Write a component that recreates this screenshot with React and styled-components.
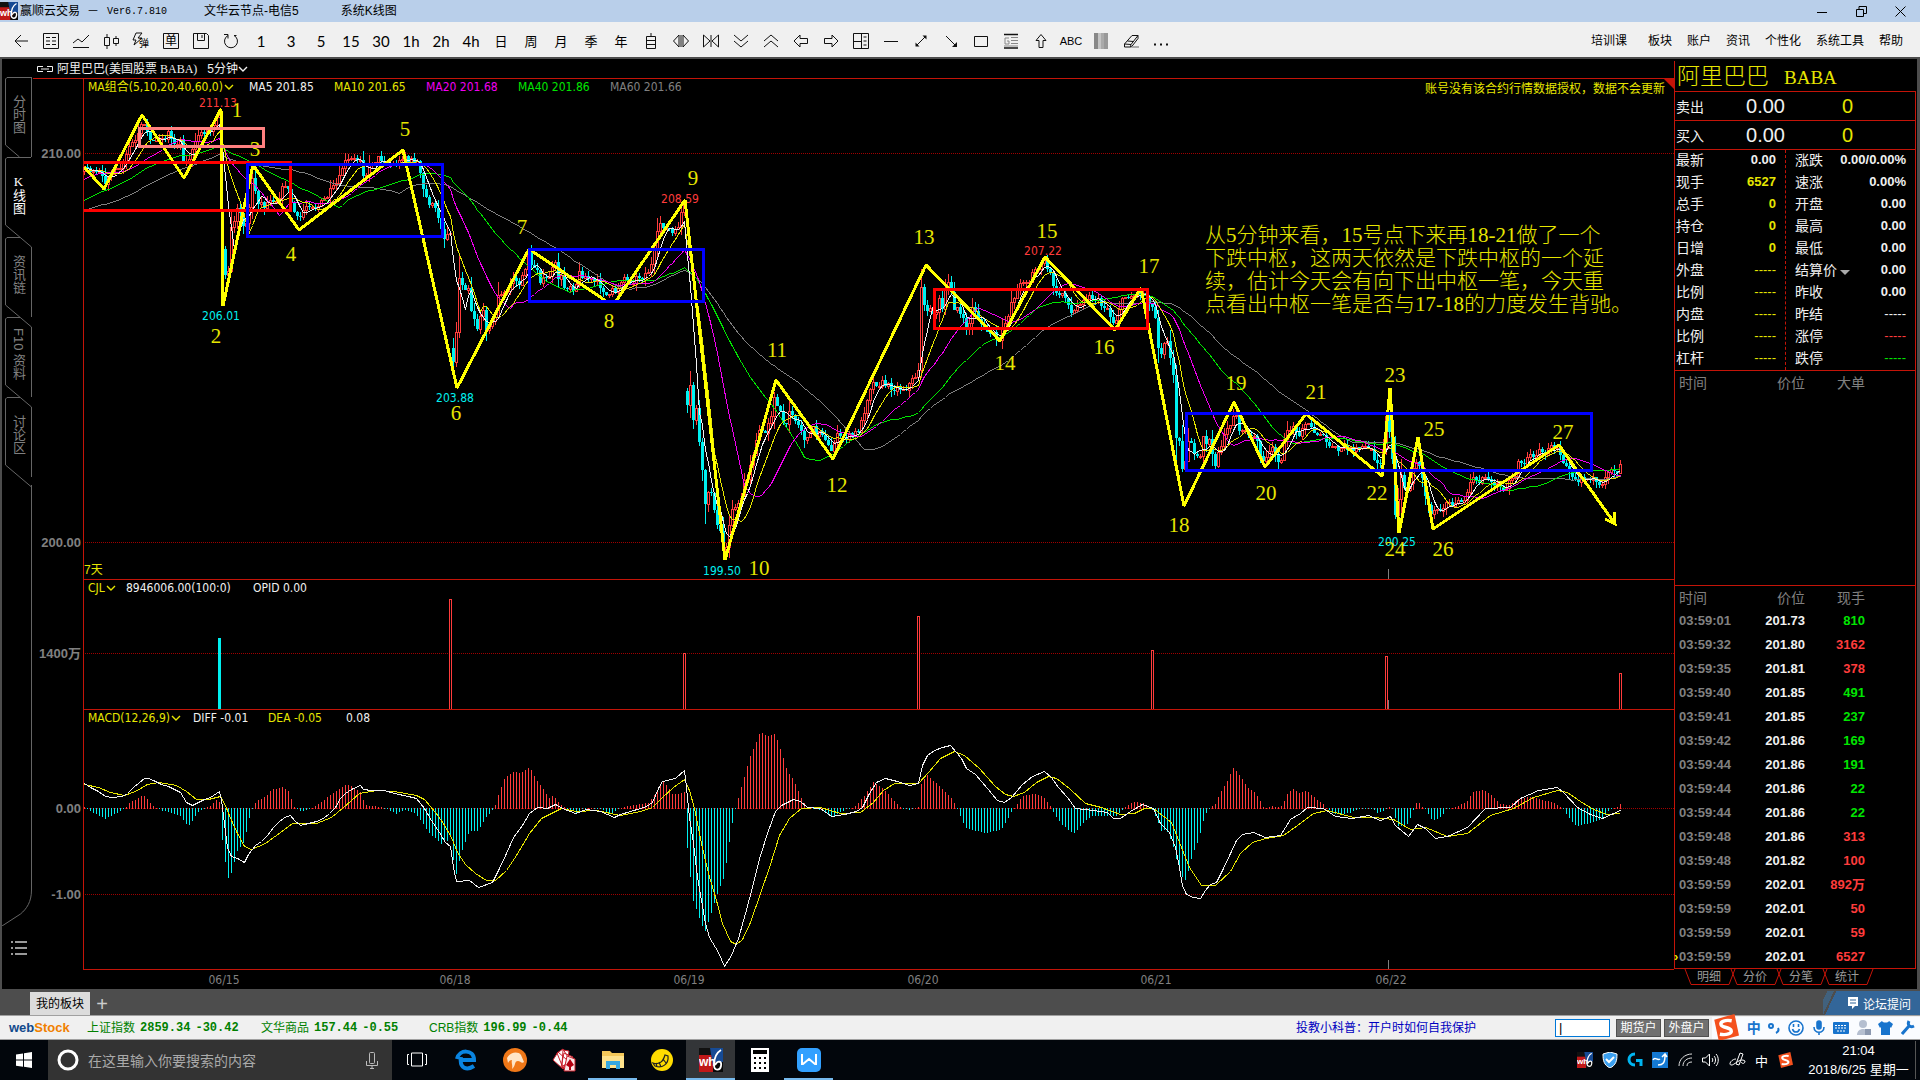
import React from "react";
import styled, { createGlobalStyle, ThemeProvider } from "styled-components";

const theme = {
    line: "#c41408",
    grid: "#a00000",
    up: "#ff3c3c",
    down: "#00f0f0",
    yellow: "#e6e600",
    bright: "#ffff00",
    white: "#f0f0f0",
    magenta: "#f000f0",
    green: "#00e600",
    gray: "#808080",
    frame: "#4d4d4d",
    bar: "#f0f0f0",
    cjk: '"Noto Sans CJK SC", sans-serif',
    ui: '"Liberation Sans", "Noto Sans CJK SC", sans-serif',
    legend: '"DejaVu Sans Condensed", "Noto Sans", "Noto Sans CJK SC", sans-serif',
    thin: '"Lato", "Noto Sans CJK SC", sans-serif',
    serif: '"Liberation Serif", "Noto Sans CJK SC", serif',
    mono: '"Liberation Mono", "Noto Sans CJK SC", monospace'
};

const GlobalStyle = createGlobalStyle`
    * {
        box-sizing: border-box;
    }

    body {
        margin: 0;
        background: #000;
        font-family: ${theme.ui};
        font-size: 12px;
    }

    button {
        margin: 0;
        padding: 0;
        border: 0;
        background: none;
        color: inherit;
        font: inherit;
        white-space: nowrap;
    }

    svg {
        display: block;
        flex: none;
    }
`;

const Window = styled.div`
    display: flex;
    flex-direction: column;
    min-height: 100vh;
    overflow: hidden;
`;

/* ---------- series data ---------- */

const parse = (text) =>
    text.trim().split(/\s+/).map((pair) => pair.split(",").map(Number));

const sample = (points, x) => {
    let i = 1;
    while (i < points.length - 1 && points[i][0] < x) i += 1;
    const [x0, y0] = points[i - 1];
    const [x1, y1] = points[i];
    return y0 + ((y1 - y0) * (x - x0)) / (x1 - x0);
};

const STEP = 3;
const FIRST = 84;
const LAST = 1620;
const GAPS = [222, 453, 687];

const CLOSES = parse(`
-96,230 -36,232 0,222 24,205 40,185 60,172 84,167 88,168 94,175 100,172 104,185 107,173 112,173 118,170 124,162
130,143 135,142 139,133 142,123 147,131 153,142 159,135 163,140 168,132 173,143 180,140 184,165 188,160 194,147
198,134 204,131 210,130 214,120 216,114 219,112 222,250 225,272 228,268 231,230 235,215 239,207 241,213 244,230
247,218 250,200 253,170 256,200 261,203 265,207 269,197 276,200 282,189 286,182 290,200 294,212 298,222 304,207
310,203 316,208 322,202 329,193 335,186 339,178 343,163 349,160 357,159 361,158 364,180 367,170 373,160 380,158
386,163 392,165 398,163 404,153 408,162 414,160 418,163 422,187 427,200 433,207 437,213 441,226 443,240 446,235
450,230 453,363 456,330 459,278 462,283 465,287 468,286 471,310 474,318 477,328 480,315 483,313 486,327 489,323
492,323 495,317 498,293 501,295 507,292 510,283 514,275 517,285 520,283 523,275 525,267 528,252 531,268 534,267
537,268 540,280 546,280 549,275 552,270 555,265 558,277 561,277 564,287 570,285 573,288 576,283 579,273 583,275
590,280 597,282 600,285 603,290 607,297 610,297 613,287 616,293 619,283 622,277 625,277 628,282 632,280 637,277
642,277 646,272 649,270 653,260 656,240 659,223 662,223 665,230 668,227 670,232 673,235 677,230 680,215 684,205
687,408 690,387 693,420 696,407 699,443 702,473 705,503 709,492 711,492 714,507 717,527 720,533 723,550 726,547
728,532 730,513 733,503 735,508 738,505 741,497 744,478 747,480 750,463 754,450 757,440 760,425 762,433 765,433
769,417 771,413 775,388 778,417 781,413 784,427 787,428 789,408 792,412 796,423 799,427 802,432 805,442 808,440
811,423 816,435 820,427 823,435 826,445 829,447 832,453 835,432 838,438 844,437 850,436 856,432 860,427 864,410
868,393 871,383 877,383 883,383 889,386 895,388 901,388 907,387 913,378 915,376 918,369 921,285 924,308 928,308
931,313 934,310 937,312 940,295 942,310 945,293 948,283 952,293 954,307 958,307 960,315 965,325 968,330 971,308
975,310 979,320 983,328 987,332 991,333 995,337 999,342 1003,328 1007,317 1011,302 1015,293 1019,287 1024,277
1028,283 1032,273 1037,267 1040,267 1044,262 1048,270 1052,280 1056,295 1062,293 1067,297 1069,313 1073,313
1078,303 1083,297 1089,297 1095,298 1101,305 1107,307 1111,320 1115,323 1118,310 1124,297 1130,295 1136,295
1141,292 1146,295 1150,303 1154,313 1156,323 1158,345 1161,352 1164,340 1168,338 1171,370 1173,377 1176,437
1180,438 1183,480 1185,463 1188,440 1191,440 1194,457 1198,460 1200,457 1203,438 1206,442 1209,440 1212,457
1215,463 1219,448 1224,437 1227,430 1231,420 1234,412 1238,420 1240,437 1245,428 1249,438 1254,437 1258,445
1261,457 1265,465 1267,455 1272,450 1277,460 1281,457 1285,437 1290,427 1293,425 1297,437 1302,425 1306,422
1310,427 1315,433 1320,432 1325,442 1331,447 1338,450 1343,448 1349,447 1352,455 1357,447 1363,448 1368,447
1374,457 1379,463 1382,460 1386,414 1389,433 1392,460 1395,517 1399,493 1401,477 1405,487 1407,490 1410,482
1413,470 1416,460 1418,460 1421,473 1424,493 1426,497 1429,510 1432,513 1436,507 1440,508 1445,503 1450,503
1456,505 1461,500 1466,500 1470,480 1474,478 1477,485 1483,475 1486,475 1490,485 1495,483 1500,488 1506,485
1511,478 1515,475 1518,460 1524,463 1529,457 1534,453 1540,452 1545,453 1550,448 1556,445 1559,450 1563,460
1566,463 1572,475 1577,480 1581,477 1586,478 1591,477 1595,483 1600,490 1604,483 1607,470 1612,467 1616,472
1621,463
`);

const DIFF = `
84,783 90,787 98,791 105,796 112,797 122,796 127,793 133,787 139,782 144,778 148,778 153,780 161,784 168,786
176,790 180,792 186,802 192,805 198,802 204,799 210,797 216,793 219,791 221,800 224,823 227,847 231,856 237,858
244,862 248,854 255,845 261,841 267,835 273,827 278,822 284,817 290,815 294,820 300,825 308,823 316,821 323,818
329,813 335,807 340,798 345,793 351,789 360,785 363,789 371,790 384,790 394,793 408,796 416,798 424,808 431,820
439,832 445,842 450,846 453,867 456,881 469,880 478,887 492,882 499,868 506,853 513,837 522,825 529,813 537,807
547,808 555,804 562,808 575,813 586,809 600,811 607,814 614,817 620,814 640,808 646,806 652,802 658,788 662,781
675,778 684,770 686,787 689,817 693,843 697,877 701,900 705,923 709,937 718,952 724,966 731,955 738,938 745,913
752,887 760,855 767,833 775,811 781,805 793,799 800,801 807,807 820,808 831,816 844,814 856,811 862,807 869,793
876,782 885,778 897,781 909,785 918,783 922,765 927,755 934,750 942,747 950,745 956,752 961,758 966,768 975,774
987,788 997,800 1004,802 1011,797 1022,784 1032,776 1044,771 1051,777 1058,787 1067,797 1075,808 1093,810
1107,812 1113,818 1120,818 1130,811 1142,804 1153,808 1160,823 1169,832 1175,847 1179,867 1182,885 1186,894
1193,897 1200,898 1205,890 1210,884 1216,882 1223,868 1230,853 1236,840 1242,834 1253,832 1265,837 1280,835
1290,819 1300,813 1307,807 1323,808 1335,816 1352,818 1368,815 1380,820 1390,816 1395,825 1408,836 1417,824
1425,828 1435,838 1447,836 1467,827 1485,808 1510,807 1520,798 1538,790 1557,787 1563,792 1577,807 1590,814
1602,818 1620,810
`;

const DEA = `
84,784 98,787 110,792 124,795 135,791 147,784 159,782 176,785 186,791 196,799 208,799 220,796 224,803 231,820
237,833 244,846 251,849 265,843 280,832 292,823 316,823 331,817 343,807 359,793 376,790 394,791 416,795 424,799
435,812 443,823 451,837 457,852 465,864 475,873 486,880 495,880 506,870 516,855 529,833 541,818 551,813 561,808
576,811 596,810 620,815 640,811 652,807 662,797 673,787 684,779 689,790 694,808 701,843 708,873 716,900 722,923
730,941 736,944 742,939 750,922 760,893 769,867 779,835 789,818 801,808 820,807 840,813 860,812 873,802 883,790
894,783 918,783 928,772 940,758 954,751 964,755 979,768 995,786 1005,794 1013,796 1024,792 1036,782 1048,776
1056,778 1069,788 1085,803 1101,807 1120,814 1134,813 1144,808 1153,808 1171,822 1179,842 1189,867 1201,885
1215,885 1230,871 1240,853 1252,842 1265,838 1283,835 1297,825 1313,813 1327,810 1353,817 1373,817 1393,819
1410,829 1425,827 1447,836 1467,833 1490,815 1513,808 1533,797 1557,790 1567,792 1580,801 1593,809 1607,814
1620,813
`;

const HIST = parse(`
84,2 90,-3 105,-11 120,-3 124,0 129,6 143,14 153,3 160,-2 180,-8 188,-19 198,-4 204,0 210,3 216,9 219,7 222,-32
225,-54 228,-70 231,-65 237,-43 243,-35 246,-24 249,-10 252,0 256,8 265,12 271,19 282,22 288,18 294,2 301,-4
310,0 318,5 329,13 345,24 351,23 360,17 365,4 380,2 385,0 396,-6 404,-2 414,-5 420,-12 428,-24 441,-36 447,-33
450,-27 453,-52 456,-66 461,-45 469,-23 478,-23 486,-9 494,0 496,8 504,30 512,37 521,36 529,42 537,28 549,11
553,13 561,4 566,0 576,-5 586,1 598,0 610,-6 617,-2 623,2 640,5 648,6 658,20 663,28 673,14 684,17 687,-40
690,-69 693,-93 702,-118 705,-123 711,-105 717,-86 723,-71 726,-55 729,-34 732,-15 735,0 738,11 741,22 750,53
760,77 767,73 775,75 781,57 787,38 793,30 799,15 805,4 810,0 824,-3 832,-9 844,-2 850,0 856,4 864,13 873,27
883,20 897,5 902,0 910,-2 918,2 921,25 927,34 940,22 952,10 957,0 962,-14 967,-21 985,-25 1001,-22 1009,-8
1013,0 1017,5 1022,13 1034,15 1042,13 1050,3 1053,-4 1060,-15 1073,-26 1083,-15 1091,-8 1109,-8 1116,-8
1122,-2 1126,3 1132,7 1144,6 1150,1 1153,-3 1161,-23 1166,-22 1172,-35 1177,-55 1183,-72 1186,-72 1189,-58
1192,-47 1198,-33 1203,-13 1207,-3 1210,2 1215,5 1221,18 1227,28 1233,41 1239,34 1248,21 1255,16 1261,6 1264,0
1272,3 1277,1 1282,4 1287,15 1293,20 1299,16 1307,18 1317,9 1323,5 1327,0 1332,-5 1342,-7 1352,-4 1360,0
1372,0 1377,-5 1385,-3 1388,2 1392,0 1397,-17 1399,-19 1408,-16 1413,-2 1417,8 1421,3 1425,0 1432,-13 1441,-9
1447,0 1456,2 1467,8 1473,17 1484,19 1492,13 1500,5 1510,4 1518,10 1530,12 1538,10 1555,6 1562,0 1570,-12
1576,-18 1585,-16 1598,-13 1605,-7 1610,0 1617,2 1620,5
`);

let seed = 7;
const rand = () => {
    seed = (seed * 16807) % 2147483647;
    return seed / 2147483647;
};

const bars = [];
for (let x = FIRST - 60 * STEP; x <= LAST; x += STEP) {
    const prev = bars[bars.length - 1];
    const close = Math.round(sample(CLOSES, x) + (rand() - 0.5) * 7);
    let open = prev ? prev.close : close;
    if (GAPS.includes(x)) open = close - 14;
    const wick = 3 + Math.abs(close - open) * 0.3;
    bars.push({
        x,
        open,
        close,
        high: Math.round(Math.min(open, close) - rand() * wick * 1.6),
        low: Math.round(Math.max(open, close) + rand() * wick * 1.6)
    });
}

const average = (span) =>
    bars
        .map((bar, i) => {
            if (i < span - 1) return null;
            const sum = bars.slice(i - span + 1, i + 1).reduce((acc, b) => acc + b.close, 0);
            return `${bar.x},${Math.round(sum / span)}`;
        })
        .slice(60)
        .join(" ");

const candles = bars.slice(60);

const hist = candles.map(({ x }) => ({ x, h: Math.round(sample(HIST, x)) }));

const ZIGZAG = "84,167 104,189 142,115 184,178 221,109 223,306 253,165 299,230 403,150 457,388 529,249 606,301 616,301 685,200 725,560 776,380 833,459 926,265 1000,341 1045,257 1115,330 1141,288 1184,506 1234,402 1265,467 1306,414 1382,476 1390,388 1399,533 1418,437 1433,529 1559,445 1615,524";

const BOXES = [
    { x: 139, y: 128, w: 124, h: 18, color: "#ff8080" },
    { x: 80, y: 162, w: 210, h: 48, color: "#ff0000" },
    { x: 247, y: 164, w: 195, h: 72, color: "#0000ff" },
    { x: 529, y: 249, w: 174, h: 52, color: "#0000ff" },
    { x: 934, y: 289, w: 213, h: 39, color: "#ff0000" },
    { x: 1186, y: 413, w: 405, h: 57, color: "#0000ff" }
];

const WAVES = [
    [237, 110], [216, 336], [255, 149], [291, 254], [405, 129], [456, 413], [522, 227], [609, 321], [693, 178],
    [759, 568], [777, 350], [837, 485], [924, 237], [1005, 363], [1047, 231], [1104, 347], [1149, 266], [1179, 525],
    [1236, 383], [1266, 493], [1316, 392], [1377, 493], [1395, 375], [1395, 549], [1434, 429], [1443, 549], [1563, 432]
];

const PRICES = [
    [218, 102, "211.13", "up"],
    [221, 315, "206.01", "down"],
    [455, 397, "203.88", "down"],
    [680, 198, "208.59", "up"],
    [722, 570, "199.50", "down"],
    [1043, 250, "207.22", "up"],
    [1397, 541, "200.25", "down"]
];

const NOTE = [
    "从5分钟来看，15号点下来再18-21做了一个",
    "下跌中枢，这两天依然是下跌中枢的一个延",
    "续，估计今天会有向下出中枢一笔，今天重",
    "点看出中枢一笔是否与17-18的力度发生背驰。"
];

/* ---------- title bar ---------- */

const TitleBar = styled.header`
    display: flex;
    align-items: center;
    height: 22px;
    background: #b9cfea;
    color: #000;
    font-size: 12px;
    line-height: 18px;
`;

const TitleText = styled.span`
    margin-left: ${({ gap }) => gap || 0}px;
    white-space: pre;
`;

const Mono = styled.span`
    font-family: ${theme.mono};
    font-size: 10px;
`;

const WindowButtons = styled.div`
    display: flex;
    margin-left: auto;
`;

const WindowButton = styled.button`
    display: flex;
    align-items: center;
    justify-content: center;
    width: 39px;
    height: 22px;
`;

const WhLogo = ({ size = 18 }) => (
    <svg width={size} height={size} viewBox="0 0 24 24">
        <rect width="24" height="24" fill="#111" />
        <path d="M0 7h14v17H0z" fill="#c01818" />
        <path d="M11 0h13v16l-9 8z" fill="#164a94" />
        <path d="M14 14h10v10H14z" fill="#080808" />
        <text x="0" y="18" fontFamily="Liberation Sans" fontWeight="bold" fontSize="12" fill="#fff">wh</text>
        <path d="M22 2c-5 3-7 9-7 15 0 6 6 6 7 1 1-5-3-6-6-1" fill="none" stroke="#fff" strokeWidth="1.8" />
    </svg>
);

const Title = () => (
    <TitleBar>
        <WhLogo />
        <TitleText gap={2}>赢顺云交易</TitleText>
        <TitleText gap={7}>－</TitleText>
        <TitleText gap={8}><Mono>Ver6.7.810</Mono></TitleText>
        <TitleText gap={37}>文华云节点-电信5</TitleText>
        <TitleText gap={42}>系统K线图</TitleText>
        <WindowButtons>
            <WindowButton aria-label="最小化">
                <svg width="11" height="11"><path d="M0 6.500h10" stroke="#000" /></svg>
            </WindowButton>
            <WindowButton aria-label="还原">
                <svg width="11" height="11" fill="none" stroke="#000"><path d="M.5 3.500h7v7h-7zM3 3V.5h7.500v7H8" /></svg>
            </WindowButton>
            <WindowButton aria-label="关闭">
                <svg width="11" height="11"><path d="M.5.5l10 10M10.500.5l-10 10" stroke="#000" /></svg>
            </WindowButton>
        </WindowButtons>
    </TitleBar>
);

/* ---------- toolbar ---------- */

const ToolbarRow = styled.nav`
    display: flex;
    align-items: center;
    justify-content: space-between;
    height: 37px;
    padding: 0 17px 0 6px;
    border-bottom: 2px solid ${theme.frame};
    background: ${theme.bar};
    color: #000;
`;

const Tools = styled.div`
    display: flex;
    padding-top: 3px;
`;

const Tool = styled.button`
    display: flex;
    align-items: center;
    justify-content: center;
    width: 30px;
    height: 28px;
    font-family: ${theme.thin};
    font-size: ${({ small }) => (small ? 13 : 15)}px;
    line-height: 20px;
`;

const TextTool = styled(Tool)`
    font-family: ${theme.ui};
    font-size: 11px;
`;

const Menu = styled.div`
    display: flex;
    gap: 15px;
`;

const MenuItem = styled.button`
    font-size: 12px;

    &:first-child {
        margin-right: 6px;
    }
`;

const glyph = {
    返回: <path d="M15 8H2M8 2L2 8l6 6" />,
    报价: <><path d="M.5.5h15v15H.5z" /><path d="M3 4.500h4M9 4.500h4M3 8h4M9 8h4M3 11.500h4M9 11.500h4" /></>,
    分时: <path d="M0 14.500h16M0 10l5-4 4 3 7-7" />,
    K线: <><path d="M1.500 4.500h5v8h-5zM4 1v3.500M4 12.500V16M10.500 5.500h5v5h-5zM13 3v2.500M13 10.500V13" /></>,
    闪电: <><path d="M3 0h6L5 5h4L1 12l2-5H0z" /><text x="6" y="14" fontSize="10" stroke="none" fill="#000">弹</text></>,
    下单: <><path d="M.5.5h15v15H.5z" /><text x="2" y="12" fontSize="12" stroke="none" fill="#000">单</text></>,
    保存: <path d="M.5.5h13l2 2v13H.5zM4.500.5v7h7v-7M9 2v3" />,
    刷新: <path d="M5 2.500A6.500 6.500 0 1 0 11 2.500M5 5.500v-4H1M11 2.500h2.500" />
};

const shapes = {
    列表: <path d="M3.500 3.500h9v12h-9zM3.500 7.500h9M3.500 11.500h9M8 3.500V0" />,
    拉伸: <path d="M6 2v12L.5 8zM10 2v12l5.500-6zM8 2v12" />,
    压缩: <path d="M.5 2v12L7 8zM15.500 2v12L9 8zM8 2v12" />,
    下移: <path d="M1 2l7 6 7-6M1 8l7 6 7-6" />,
    上移: <path d="M1 8l7-6 7 6M1 14l7-6 7 6" />,
    左移: <path d="M1 8l6-6v3.500h7.500v5H7V14z" />,
    右移: <path d="M15 8L9 2v3.500H1.500v5H9V14z" />,
    分屏: <path d="M.5.5h15v15H.5zM8.500.5v15M.5 8.500h8M10.500 4h3M10.500 8h3M10.500 12h3" />,
    横线: <path d="M1 8.500h14" />,
    线段: <><path d="M3 13L13 3" /><path d="M13.500 2.500v4l-4-4zM2.500 13.500v-4l4 4z" fill="#111" stroke="none" /></>,
    箭头: <><path d="M3 3l10 10" /><path d="M14 14V9l-5 5z" fill="#111" stroke="none" /></>,
    矩形: <path d="M1.500 3.500h13v10h-13z" />,
    文本框: <><path d="M1 1.500h14M1 15h14" strokeWidth="1.500" /><path d="M8 4.500h7M8 7.500h7M8 10.500h7M1 13h14M6 5H2v6h4V8H4" stroke="#888" /></>,
    上箭头: <path d="M8 1.500l5 6h-3v7H6v-7H3z" />
};

const extras = {
    色板: <g stroke="none"><path d="M1 0h5v16H1z" fill="#888" /><path d="M5 0h6v16H5z" fill="#c4c4c4" /><path d="M8 0h3v16H8z" fill="#aaa" /><path d="M11 0h4v16h-4z" fill="#999" /></g>,
    橡皮: <><path d="M1.500 11L9 2.500h6L8 11.500zM1.500 11v3h6l.5-2.500M8 14.500l7-9v-3M4.500 8l6 .5" /><path d="M9 13h7v2H9z" fill="#aaa" stroke="none" /></>,
    更多: <path d="M1 11.500h2M7 11.500h2M13 11.500h2" strokeWidth="2" />
};

const renderTools = (set) =>
    Object.entries(set).map(([name, body]) => (
        <Tool key={name} aria-label={name}>
            <svg width="16" height="16" viewBox="0 0 16 16" fill="none" stroke="#111" overflow="visible">{body}</svg>
        </Tool>
    ));

const PERIODS = ["1", "3", "5", "15", "30", "1h", "2h", "4h", "日", "周", "月", "季", "年"];
const MENU = ["培训课", "板块", "账户", "资讯", "个性化", "系统工具", "帮助"];

const Toolbar = () => (
    <ToolbarRow>
        <Tools>
            {renderTools(glyph)}
            {PERIODS.map((p) => <Tool key={p} small={/[^\dh]/.test(p) ? 1 : undefined}>{p}</Tool>)}
            {renderTools(shapes)}
            <TextTool>ABC</TextTool>
            {renderTools(extras)}
        </Tools>
        <Menu>
            {MENU.map((m) => <MenuItem key={m}>{m}</MenuItem>)}
        </Menu>
    </ToolbarRow>
);

/* ---------- left rail ---------- */

const Main = styled.main`
    display: flex;
    flex: 1;
    border: solid ${theme.frame};
    border-width: 0 3px 0 2px;
    background: #000;
`;

const Rail = styled.nav`
    display: flex;
    flex-direction: column;
    width: 30px;
    padding: 18px 0 0 3px;
    color: ${theme.gray};
`;

const RailTab = styled.button`
    position: relative;
    width: 27px;
    height: 80px;
    padding-bottom: 6px;
    writing-mode: vertical-rl;
    text-orientation: ${({ active }) => (active ? "upright" : "mixed")};
    color: ${({ active }) => (active ? "#fff" : theme.gray)};
    font-family: ${({ active }) => (active ? theme.serif : theme.ui)};
    font-size: 13px;
    text-align: center;
    line-height: 27px;
`;

const Outline = styled.svg`
    position: absolute;
    inset: 0;
    overflow: visible;
`;

const RailEdge = styled.div`
    display: flex;
    flex: 1;
    flex-direction: column;
    justify-content: flex-end;
    margin-left: -3px;
`;

const RailLine = styled.div`
    flex: 1;
    margin-top: 8px;
    border-right: 1px solid #666;
`;

const RailList = styled.button`
    display: flex;
    height: 63px;
    padding: 15px 0 0 9px;
`;

const TABS = ["分时图", "K线图", "资讯链", "F10 资料", "讨论区"];

const LeftRail = () => (
    <Rail>
        {TABS.map((tab, i) => (
            <RailTab key={tab} active={i === 1 ? 1 : undefined}>
                <Outline width="27" height="90" fill="none" stroke="#666">
                    <path d={i === 1 ? "M26 .5H2L.5 2v66L26.500 90" : `M${i > 1 ? 15 : 26} .5H2L.5 2v66L${i ? "26.500 90" : "14.500 80"}`} />
                    {i !== 1 && <path d={i ? "M26.500 10v70" : "M26.500 0v80"} />}
                </Outline>
                {tab}
            </RailTab>
        ))}
        <RailEdge>
            <RailLine />
            <svg width="30" height="36" fill="none" stroke="#666"><path d="M29.500 0c0 12-5 19-11 24L0 36" /></svg>
            <RailList aria-label="列表">
                <svg width="16" height="14" stroke="#999" strokeWidth="2"><path d="M0 1h2M4 1h12M0 7h2M4 7h12M0 13h2M4 13h12" /></svg>
            </RailList>
        </RailEdge>
    </Rail>
);

/* ---------- charts ---------- */

const ChartColumn = styled.section`
    display: flex;
    flex: 1;
    flex-direction: column;
    min-width: 0;
    padding-left: 1px;
`;

const Symbol = styled.div`
    display: flex;
    align-items: center;
    height: 20px;
    padding: 0 0 0 4px;
    border-bottom: 1px solid ${theme.line};
    color: ${theme.white};
    font-size: 12px;
    line-height: 16px;
`;

const SymbolName = styled.span`
    margin: 0 10px 0 4px;
    font-family: ${theme.serif};
`;

const Pane = styled.div`
    position: relative;
    margin-left: 50px;
    border: solid ${theme.line};
    border-width: 0 0 1px 1px;
`;

const Legend = styled.div`
    display: grid;
    grid-template-columns: ${({ cols }) => cols};
    height: 16px;
    padding-left: 4px;
    font-family: ${theme.legend};
    font-size: 12px;
    line-height: 16px;
    white-space: nowrap;
`;

const LegendItem = styled.span`
    display: flex;
    align-items: center;
    gap: 1px;
    color: ${({ tone }) => theme[tone]};
`;

const Notice = styled.span`
    position: absolute;
    top: 0;
    right: 9px;
    color: ${theme.yellow};
    font-size: 12px;
    line-height: 20px;
`;

const Corner = styled.svg`
    position: absolute;
    top: 0;
    right: 0;
`;

const Plot = styled.svg`
    width: 100%;
    height: auto;
    overflow: visible;
`;

const AxisText = styled.text`
    fill: ${theme.gray};
    font-family: ${theme.ui};
    font-size: 13px;
    font-weight: bold;
    text-anchor: end;
`;

const DateText = styled.text`
    fill: ${theme.gray};
    font-family: ${theme.legend};
    font-size: 12px;
    text-anchor: middle;
`;

const PriceText = styled.text`
    fill: ${({ tone }) => theme[tone]};
    font-family: ${theme.legend};
    font-size: 12px;
    text-anchor: middle;
`;

const WaveText = styled.text`
    fill: ${theme.yellow};
    font-family: ${theme.serif};
    font-size: 21px;
    font-weight: 300;
    text-anchor: ${({ anchor }) => anchor || "middle"};
`;

const Dates = styled.div`
    margin-left: 51px;
`;

const Chevron = ({ color = theme.yellow }) => (
    <svg width="10" height="6" fill="none" stroke={color} strokeWidth="1.400"><path d="M1 1l4 4 4-4" /></svg>
);

const GridLine = ({ y }) => (
    <path d={`M85 ${y}.5H1674`} stroke={theme.grid} strokeDasharray="1 1" shapeRendering="crispEdges" />
);

const Candle = ({ x, open, close, high, low }) => {
    const top = Math.min(open, close);
    const size = Math.max(Math.abs(open - close), 1);
    if (close <= open) {
        return (
            <g stroke={theme.up}>
                <path d={`M${x}.5 ${high}V${top}M${x}.5 ${top + size}V${low}`} />
                <rect x={x - 0.5} y={top + 0.5} width="2" height={size} fill="#000" />
            </g>
        );
    }
    return (
        <g fill={theme.down}>
            <rect x={x} y={high} width="1" height={low - high} />
            <rect x={x - 1} y={top} width="3" height={size} />
        </g>
    );
};

const PricePlot = () => (
    <Plot viewBox="84 95 1590 484">
        <GridLine y={153} />
        <GridLine y={542} />
        <AxisText x="81" y="158">210.00</AxisText>
        <AxisText x="81" y="547">200.00</AxisText>
        <g shapeRendering="crispEdges">
            {candles.map((bar) => <Candle key={bar.x} {...bar} />)}
            <g fill="none" strokeWidth="1" transform="translate(.5 .5)">
                <polyline points={average(60)} stroke={theme.gray} />
                <polyline points={average(40)} stroke={theme.green} />
                <polyline points={average(20)} stroke={theme.magenta} />
                <polyline points={average(10)} stroke={theme.yellow} />
                <polyline points={average(5)} stroke={theme.white} />
            </g>
        </g>
        {PRICES.map(([x, y, text, tone]) => <PriceText key={text} x={x} y={y + 5} tone={tone}>{text}</PriceText>)}
        {WAVES.map(([x, y], i) => <WaveText key={i} x={x} y={y + 7}>{i + 1}</WaveText>)}
        {NOTE.map((line, i) => <WaveText key={line} anchor="start" x="1205" y={242 + i * 23}>{line}</WaveText>)}
        <clipPath id="plot-area"><rect x="84" y="95" width="1590" height="484" /></clipPath>
        <g clipPath="url(#plot-area)" fill="none" strokeWidth="3" shapeRendering="crispEdges">
            <polyline points={ZIGZAG} stroke={theme.bright} strokeLinejoin="bevel" />
            <path d="M1605 519l10 5-1-12" stroke={theme.bright} />
            {BOXES.map((b) => <rect key={b.x} x={b.x + 0.5} y={b.y + 0.5} width={b.w} height={b.h} stroke={b.color} />)}
        </g>
        <path d="M1388.500 569v10" stroke={theme.gray} />
        <text x="84" y="574" fill={theme.yellow} fontFamily="Liberation Sans, Noto Sans CJK SC" fontSize="12">7天</text>
    </Plot>
);

const VOLUMES = [[450, 599], [684, 653], [918, 616], [1152, 650], [1386, 656], [1620, 673]];

const VolumePlot = () => (
    <Plot viewBox="84 596 1590 113">
        <GridLine y={653} />
        <AxisText x="81" y="658">1400万</AxisText>
        <rect x="218" y="638" width="3" height="71" fill={theme.down} />
        {VOLUMES.map(([x, y]) => (
            <path key={x} d={`M${x - 0.5} 709V${y + 0.5}h2V709`} fill="none" stroke={theme.up} shapeRendering="crispEdges" />
        ))}
        <path d="M1388.500 700v9" stroke={theme.gray} />
    </Plot>
);

const MacdPlot = () => (
    <Plot viewBox="84 726 1590 243">
        <GridLine y={808} />
        <GridLine y={894} />
        <AxisText x="81" y="813">0.00</AxisText>
        <AxisText x="81" y="899">-1.00</AxisText>
        <g shapeRendering="crispEdges">
            {hist.map(({ x, h }) => (
                <rect key={x} x={x} y={h > 0 ? 809 - h : 808} width="1" height={Math.max(Math.abs(h), 1)} fill={h > 0 ? theme.up : theme.down} />
            ))}
            <g fill="none" transform="translate(.5 .5)">
                <polyline points={DEA} stroke={theme.yellow} />
                <polyline points={DIFF} stroke={theme.white} />
            </g>
        </g>
        <path d="M1388.500 960v9" stroke={theme.gray} />
    </Plot>
);

const DATES = [[224, "06/15"], [455, "06/18"], [689, "06/19"], [923, "06/20"], [1156, "06/21"], [1391, "06/22"]];

const Charts = () => (
    <ChartColumn>
        <Symbol>
            <svg width="16" height="6" fill="none" stroke={theme.white}><path d="M6 .5H.5v5H6M10 .5h5.500v5H10M4 3h8" /></svg>
            <SymbolName>阿里巴巴(美国股票 BABA)</SymbolName>
            5分钟
            <Chevron color={theme.white} />
        </Symbol>
        <Pane>
            <Legend cols="161px 85px 92px 92px 92px 92px">
                <LegendItem tone="yellow">MA组合(5,10,20,40,60,0)<Chevron /></LegendItem>
                <LegendItem tone="white">MA5 201.85</LegendItem>
                <LegendItem tone="yellow">MA10 201.65</LegendItem>
                <LegendItem tone="magenta">MA20 201.68</LegendItem>
                <LegendItem tone="green">MA40 201.86</LegendItem>
                <LegendItem tone="gray">MA60 201.66</LegendItem>
            </Legend>
            <Notice>账号没有该合约行情数据授权，数据不会更新</Notice>
            <Corner width="10" height="10"><path d="M0 0h10v10z" fill={theme.line} /></Corner>
            <PricePlot />
        </Pane>
        <Pane>
            <Legend cols="38px 127px 1fr">
                <LegendItem tone="yellow">CJL<Chevron /></LegendItem>
                <LegendItem tone="white">8946006.00(100:0)</LegendItem>
                <LegendItem tone="white">OPID 0.00</LegendItem>
            </Legend>
            <VolumePlot />
        </Pane>
        <Pane>
            <Legend cols="105px 75px 78px 1fr">
                <LegendItem tone="yellow">MACD(12,26,9)<Chevron /></LegendItem>
                <LegendItem tone="white">DIFF -0.01</LegendItem>
                <LegendItem tone="yellow">DEA -0.05</LegendItem>
                <LegendItem tone="white">0.08</LegendItem>
            </Legend>
            <MacdPlot />
        </Pane>
        <Dates>
            <Plot viewBox="84 970 1590 19">
                {DATES.map(([x, label]) => <DateText key={label} x={x} y="984">{label}</DateText>)}
            </Plot>
        </Dates>
    </ChartColumn>
);

/* ---------- quote panel ---------- */

const Quote = styled.aside`
    display: flex;
    flex-direction: column;
    width: 243px;
    padding: 2px 1px 0 0;
`;

const QuoteBody = styled.div`
    display: flex;
    flex: 1;
    flex-direction: column;
    border: solid ${theme.line};
    border-width: 0 0 1px 1px;
`;

const QuoteTitle = styled.h1`
    display: flex;
    gap: 15px;
    height: 30px;
    margin: 0;
    padding-left: 2px;
    color: ${theme.yellow};
    font-family: ${theme.serif};
    font-size: 23px;
    font-weight: 300;
    line-height: 32px;
`;

const Ticket = styled.span`
    font-size: 19px;
    line-height: 34px;
`;

const Section = styled.div`
    border: solid ${theme.line};
    border-width: 1px 1px 0 0;
    flex: ${({ grow }) => (grow ? 1 : "none")};
`;

const Level = styled(Section)`
    display: grid;
    grid-template-columns: 28px 81px 1fr;
    align-items: center;
    height: 29px;
    padding: 0 62px 0 1px;
    color: ${theme.white};
    font-size: 14px;
`;

const LevelValue = styled.span`
    color: ${({ tone }) => theme[tone]};
    font-size: 20px;
    text-align: right;
`;

const Facts = styled(Section)`
    display: grid;
    grid-template-columns: 111px 1fr;
    height: 221px;
`;

const FactList = styled.dl`
    margin: 0;
    padding: 0 9px 0 ${({ last }) => (last ? 9 : 1)}px;
    border-right: ${({ last }) => (last ? "0" : `1px dashed ${theme.line}`)};
`;

const Fact = styled.div`
    display: flex;
    justify-content: space-between;
    height: 22px;
    line-height: 20px;
`;

const FactName = styled.dt`
    color: ${theme.white};
    font-size: 14px;
`;

const FactValue = styled.dd`
    margin: 0;
    color: ${({ tone }) => theme[tone]};
    font-size: 13px;
    font-weight: ${({ empty }) => (empty ? "normal" : "bold")};
`;

const Trades = styled.table`
    width: 186px;
    margin-left: 4px;
    border-collapse: collapse;
    table-layout: fixed;
    color: ${theme.gray};
    font-size: 14px;

    th,
    td {
        height: 24px;
        padding: 2px 0 0;
        font-size: 13px;
        font-weight: bold;
        line-height: 20px;
        text-align: right;
    }

    th {
        height: 22px;
        font-size: 14px;
        font-weight: normal;
    }

    th:first-child,
    td:first-child {
        text-align: left;
    }

    td:nth-child(2) {
        color: ${theme.white};
    }
`;

const Size = styled.td`
    color: ${({ tone }) => theme[tone]};
`;

const Cursor = styled.span`
    position: absolute;
    margin-left: -5px;
    color: ${theme.yellow};
`;

const PanelTabs = styled.div`
    display: flex;
    height: 20px;
    padding-left: 11px;
    color: #999;
`;

const PanelTab = styled.button`
    position: relative;
    width: 46px;
    height: 16px;
    padding-left: 2px;
    font-size: 12px;
    line-height: 16px;
`;

const LEFT_FACTS = [
    ["最新", "0.00", "white"], ["现手", "6527", "yellow"], ["总手", "0", "yellow"], ["持仓", "0", "yellow"],
    ["日增", "0", "yellow"], ["外盘", "-----", "yellow"], ["比例", "-----", "yellow"], ["内盘", "-----", "yellow"],
    ["比例", "-----", "yellow"], ["杠杆", "-----", "yellow"]
];

const RIGHT_FACTS = [
    ["涨跌", "0.00/0.00%", "white"], ["速涨", "0.00%", "white"], ["开盘", "0.00", "white"], ["最高", "0.00", "white"],
    ["最低", "0.00", "white"], ["结算价", "0.00", "white"], ["昨收", "0.00", "white"], ["昨结", "-----", "white"],
    ["涨停", "-----", "up"], ["跌停", "-----", "green"]
];

const TRADES = [
    ["03:59:01", "201.73", "810", "green"], ["03:59:32", "201.80", "3162", "up"], ["03:59:35", "201.81", "378", "up"],
    ["03:59:40", "201.85", "491", "green"], ["03:59:41", "201.85", "237", "green"], ["03:59:42", "201.86", "169", "green"],
    ["03:59:44", "201.86", "191", "green"], ["03:59:44", "201.86", "22", "green"], ["03:59:44", "201.86", "22", "green"],
    ["03:59:48", "201.86", "313", "up"], ["03:59:48", "201.82", "100", "up"], ["03:59:59", "202.01", "892万", "up"],
    ["03:59:59", "202.01", "50", "up"], ["03:59:59", "202.01", "59", "up"], ["03:59:59", "202.01", "6527", "up"]
];

const DownMark = styled.span`
    display: inline-block;
    margin-left: 3px;
    border: 5px solid transparent;
    border-top-color: #aaa;
    border-bottom: 0;
`;

const FactColumn = ({ rows, last }) => (
    <FactList last={last}>
        {rows.map(([name, value, tone], i) => (
            <Fact key={i}>
                <FactName>{name}{name === "结算价" && <DownMark />}</FactName>
                <FactValue tone={tone} empty={value === "-----" ? 1 : undefined}>{value}</FactValue>
            </Fact>
        ))}
    </FactList>
);

const TradeHead = ({ size }) => (
    <>
        <colgroup><col width="60" /><col width="66" /><col /></colgroup>
        <thead><tr><th>时间</th><th>价位</th><th>{size}</th></tr></thead>
    </>
);

const QuotePanel = () => (
    <Quote>
        <QuoteBody>
            <QuoteTitle>阿里巴巴<Ticket>BABA</Ticket></QuoteTitle>
            <Level>卖出<LevelValue tone="white">0.00</LevelValue><LevelValue tone="yellow">0</LevelValue></Level>
            <Level>买入<LevelValue tone="white">0.00</LevelValue><LevelValue tone="yellow">0</LevelValue></Level>
            <Facts>
                <FactColumn rows={LEFT_FACTS} />
                <FactColumn rows={RIGHT_FACTS} last={1} />
            </Facts>
            <Section grow={1}>
                <Trades><TradeHead size="大单" /></Trades>
            </Section>
            <Section>
                <Trades>
                    <TradeHead size="现手" />
                    <tbody>
                        {TRADES.map(([time, price, size, tone], i) => (
                            <tr key={i}>
                                <td>{i === TRADES.length - 1 && <Cursor>›</Cursor>}{time}</td>
                                <td>{price}</td>
                                <Size tone={tone}>{size}</Size>
                            </tr>
                        ))}
                    </tbody>
                </Trades>
            </Section>
        </QuoteBody>
        <PanelTabs>
            {["明细", "分价", "分笔", "统计"].map((t) => (
                <PanelTab key={t}>
                    <Outline width="50" height="16" fill="none" stroke={theme.line}><path d="M0 0l6 15.500h38L50 0" /></Outline>
                    {t}
                </PanelTab>
            ))}
        </PanelTabs>
    </Quote>
);

/* ---------- board tabs and ticker ---------- */

const Boards = styled.div`
    display: flex;
    align-items: flex-end;
    height: 26px;
    padding-left: 30px;
    background: ${theme.frame};
`;

const Board = styled.button`
    width: 60px;
    height: 23px;
    background: #dcdcdc;
    color: #000;
    font-size: 12px;
    line-height: 20px;
`;

const AddBoard = styled.button`
    width: 24px;
    height: 23px;
    color: #ccc;
    font-size: 20px;
    line-height: 20px;
`;

const Forum = styled.a`
    display: flex;
    align-items: center;
    gap: 4px;
    height: 24px;
    margin-left: auto;
    padding: 0 9px 0 24px;
    background: linear-gradient(115deg, transparent 4px, #41617d 4px, #41617d 10px, ${theme.frame} 10px, ${theme.frame} 12px, #336699 12px);
    color: #fff;
    font-size: 12px;
    text-decoration: none;
`;

const Ticker = styled.div`
    display: flex;
    align-items: center;
    height: 25px;
    border-top: 1px solid #a0a0a0;
    border-bottom: 1px solid #a0a0a0;
    background: ${theme.bar};
`;

const WebStock = styled.span`
    width: 78px;
    padding-left: 9px;
    color: #124a8c;
    font-size: 13px;
    font-weight: bold;
    line-height: 20px;

    em {
        color: #f08000;
        font-style: normal;
    }
`;

const Indexes = styled.div`
    display: grid;
    grid-template-columns: 174px 168px auto;
    padding-left: 9px;
`;

const Index = styled.span`
    display: flex;
    align-items: center;
    gap: 5px;
    color: #008000;
    font-size: 12px;
    line-height: 16px;

    b {
        font-family: ${theme.mono};
    }
`;

const News = styled.a`
    margin: 0 79px 0 auto;
    color: #0000c0;
    font-size: 12px;
    line-height: 16px;
    text-decoration: none;
`;

const CodeInput = styled.input`
    width: 55px;
    height: 18px;
    margin-right: 6px;
    padding: 0 3px;
    border: 1px solid #0078d7;
    background: #fff;
    color: #000;
    font-size: 13px;
    outline: 0;
`;

const Account = styled.button`
    width: 45px;
    height: 18px;
    margin-right: 3px;
    border: 1px solid #505050;
    background: #707070;
    color: #fff;
    font-size: 12px;
    line-height: 14px;
`;

const Ime = styled.div`
    display: flex;
    align-items: center;
    justify-content: space-between;
    width: 208px;
    height: 22px;
    padding-right: 5px;
    background: #fafcff;
    color: #1874cd;
    font-size: 14px;
    font-weight: bold;
    line-height: 18px;
`;

const SogouMark = ({ size }) => (
    <svg width={size} height={size} viewBox="0 0 24 24">
        <path d="M2 5l18-5 4 19-18 5z" fill="#f4511e" />
        <path d="M17.500 6C12 5 7 6.500 8 9.500s8 2 9 5-4 4.500-10 3.500" fill="none" stroke="#fff" strokeWidth="3" />
    </svg>
);

const INDEXES = [["上证指数", "2859.34", "-30.42"], ["文华商品", "157.44", "-0.55"], ["CRB指数", "196.99", "-0.44"]];

const StatusBar = () => (
    <>
        <Boards>
            <Board>我的板块</Board>
            <AddBoard aria-label="添加">+</AddBoard>
            <Forum href="#">
                <svg width="12" height="12"><path d="M1 0h10v9H8l-3 3V9H1z" fill="#fff" /><path d="M3 3h6M3 6h6" stroke="#336699" /></svg>
                论坛提问
            </Forum>
        </Boards>
        <Ticker>
            <WebStock>web<em>Stock</em></WebStock>
            <Indexes>
                {INDEXES.map(([name, value, change]) => (
                    <Index key={name}>{name}<b>{value}</b><b>{change}</b></Index>
                ))}
            </Indexes>
            <News href="#">投教小科普：开户时如何自我保护</News>
            <CodeInput aria-label="代码" defaultValue="|" />
            <Account>期货户</Account>
            <Account>外盘户</Account>
            <Ime>
                <SogouMark size={27} />
                中
                <svg width="12" height="12" fill="none" stroke="#1874cd" strokeWidth="2"><circle cx="3" cy="4" r="2" /><path d="M10 6c1 2 0 4-2 5" /></svg>
                <svg width="16" height="16" fill="none" stroke="#1874cd" strokeWidth="1.600"><circle cx="8" cy="8" r="7" /><path d="M4.500 9c1 4 6 4 7 0M5.500 4v3M10.500 4v3" /></svg>
                <svg width="14" height="16" fill="none" stroke="#1874cd" strokeWidth="1.600"><rect x="5" y="1" width="4" height="8" rx="2" fill="#1874cd" /><path d="M2 7c0 7 10 7 10 0M7 12v3" /></svg>
                <svg width="16" height="12"><rect width="16" height="12" rx="1" fill="#1874cd" /><path d="M2 3.500h12M2 6h12M4 9h8" stroke="#fff" strokeDasharray="2 1" /></svg>
                <svg width="14" height="16" fill="#b5bfd0"><circle cx="6" cy="4" r="4" /><path d="M0 15c0-8 12-8 12 0z" /><path d="M8 9h6v6H8z" fill="#8c99b0" /></svg>
                <svg width="15" height="14" fill="#1874cd"><path d="M0 3l4-3c1 2 6 2 7 0l4 3-2 4-1-1v8H3V6L2 7z" /></svg>
                <svg width="14" height="15" fill="none" stroke="#1874cd" strokeWidth="3"><path d="M1 14l7-8M8 1c-2 4 1 7 5 5" /></svg>
            </Ime>
        </Ticker>
    </>
);

/* ---------- taskbar ---------- */

const TaskbarRow = styled.footer`
    display: flex;
    align-items: center;
    height: 40px;
    background: #02060c;
    color: #fff;
`;

const Start = styled.button`
    display: flex;
    align-items: center;
    justify-content: center;
    width: 48px;
    height: 40px;
`;

const Search = styled.label`
    display: flex;
    align-items: center;
    gap: 9px;
    width: 344px;
    height: 40px;
    padding: 0 14px 0 9px;
    background: #333;
`;

const SearchInput = styled.input`
    flex: 1;
    min-width: 0;
    padding: 0;
    border: 0;
    background: none;
    color: #fff;
    font-family: ${theme.cjk};
    font-size: 14px;
    outline: 0;

    &::placeholder {
        color: #aaa;
        opacity: 1;
    }
`;

const Task = styled.button`
    display: flex;
    align-items: center;
    justify-content: center;
    width: 49px;
    height: 40px;
    background: ${({ active }) => (active ? "#333538" : "none")};
    box-shadow: ${({ open }) => (open ? "inset 0 -2px #76b9ed" : "none")};
`;

const Tray = styled.div`
    display: flex;
    align-items: center;
    gap: 9px;
    margin-left: auto;
    font-size: 13px;
`;

const Clock = styled.time`
    width: 114px;
    margin-right: 4px;
    font-size: 13px;
    line-height: 19px;
    text-align: center;
    border-right: 1px solid #555;
`;

const Taskbar = () => (
    <TaskbarRow>
        <Start aria-label="开始">
            <svg width="16" height="16" fill="#fff"><path d="M0 2.500L7 1.400V7.500H0zM8 1.200L16 0v7.500H8zM0 8.500h7v6.200L0 13.700zM8 8.500h8V16l-8-1.200z" /></svg>
        </Start>
        <Search>
            <svg width="22" height="22" fill="none" stroke="#fff" strokeWidth="3"><circle cx="11" cy="11" r="9" /></svg>
            <SearchInput type="text" placeholder="在这里输入你要搜索的内容" />
            <svg width="12" height="17" fill="none" stroke="#bbb"><rect x="3.500" y=".5" width="5" height="11" rx="1" /><path d="M.5 9v4.500h11V9M6 13.500v3M4 16.500h4" /></svg>
        </Search>
        <Task aria-label="任务视图">
            <svg width="20" height="16" fill="none" stroke="#fff"><path d="M4.500 1h11v13h-11zM2 2.500H.5v10H2M18 2.500h1.500v10H18" /></svg>
        </Task>
        <Task aria-label="Edge">
            <svg width="22" height="22" viewBox="0 0 22 22" fill="none" stroke="#0a84e0" strokeWidth="4"><path d="M2 10C4 0 19 0 19 11H7M6 8c-2 13 7 13 13 9" /></svg>
        </Task>
        <Task aria-label="浏览器">
            <svg width="24" height="24"><circle cx="12" cy="12" r="12" fill="#f07818" /><path d="M4 10c3-6 11-7 14-3l3 7c-2 2-4-1-6-1-4 0-2 5-6 8 1-4-1-6 0-9-2 0-3 1-4 3z" fill="#ffe6c8" /></svg>
        </Task>
        <Task aria-label="纸牌">
            <svg width="24" height="24" fill="#fff" stroke="#c8202c"><path d="M1 12l5-8 9 8-4 9zM5 5l6-4 6 10-6 9zM11 2l6 1-2 16-5-2zM12 5l9 4-4 13-8-3z" /><path d="M15 8l8 3v12H12z" fill="#fbe8e8" /><path d="M18 11l4 6-3 2v3h-2v-3l-3-2z" fill="#b40010" stroke="none" /></svg>
        </Task>
        <Task aria-label="资源管理器" open={1}>
            <svg width="22" height="20"><path d="M0 1h8l2 2h12v15H0z" fill="#f5c85a" /><path d="M0 6h22v12H0z" fill="#ffe28c" /><path d="M4 19v-8h14v8h-4v-4H8v4z" fill="#37a8e0" /></svg>
        </Task>
        <Task aria-label="香蕉">
            <svg width="22" height="22"><circle cx="11" cy="11" r="11" fill="#ffdc00" /><path d="M2 14c6 2 10-1 12-8l3 1c1 8-6 13-13 10zM5 14l1 4M8 13l2 5M12 10l3 4" fill="none" stroke="#222" strokeWidth="1.200" /></svg>
        </Task>
        <Task aria-label="赢顺云交易" active={1} open={1}><WhLogo size={24} /></Task>
        <Task aria-label="计算器">
            <svg width="18" height="24"><path d="M0 0h18v24H0z" fill="#fff" /><path d="M2 2h14v4H2z" fill="#000" /><path d="M3 10h13M3 15h13M3 20h13" stroke="#000" strokeWidth="2" strokeDasharray="2 3" /></svg>
        </Task>
        <Task aria-label="WPS" open={1}>
            <svg width="24" height="24"><rect width="24" height="24" rx="5" fill="#32a0ff" /><path d="M5 6v10h1l6-5 6 5h1V6" fill="none" stroke="#fff" strokeWidth="2" /></svg>
        </Task>
        <Tray>
            <WhLogo size={16} />
            <svg width="16" height="16"><path d="M8 0l7 2c0 7-1 11-7 14C2 13 1 9 1 2z" fill="#3ca0f0" stroke="#fff" /><path d="M4 7l3 3 5-5" fill="none" stroke="#fff" strokeWidth="2" /></svg>
            <svg width="16" height="16" fill="none" stroke="#00b4f0" strokeWidth="3"><path d="M8 2C0 2 0 13 8 13M9 8.500h5V14" /></svg>
            <svg width="16" height="16"><path d="M0 0h16v16H0z" fill="#1478d2" /><path d="M1 8c2-4 4 1 7-1M6 13c5 0 7-2 7-10M10 5l3-3 2 3" fill="none" stroke="#fff" strokeWidth="1.500" /></svg>
            <svg width="16" height="14" fill="none" stroke="#ddd"><path d="M2 13C2 6 8 1 15 1M6 13c0-5 4-8 9-8M10 13c0-3 2-4 5-4" /></svg>
            <svg width="17" height="14" fill="none" stroke="#fff"><path d="M.5 5h3l4-4v12l-4-4h-3zM10 5c1 1 1 3 0 4M12 3c2 2 2 6 0 8M14 1c3 3 3 9 0 12" /></svg>
            <svg width="18" height="16" fill="none" stroke="#fff"><path d="M8 12L12 1l3 1-4 11zM8 7c-4 0-8 5-5 6s9-8 14-4c0 3-3 3-4 1" /></svg>
            <span>中</span>
            <SogouMark size={16} />
            <Clock>21:04<br />2018/6/25 星期一</Clock>
        </Tray>
    </TaskbarRow>
);

const App = () => (
    <ThemeProvider theme={theme}>
        <GlobalStyle />
        <Window>
            <Title />
            <Toolbar />
            <Main>
                <LeftRail />
                <Charts />
                <QuotePanel />
            </Main>
            <StatusBar />
            <Taskbar />
        </Window>
    </ThemeProvider>
);

export default App;
